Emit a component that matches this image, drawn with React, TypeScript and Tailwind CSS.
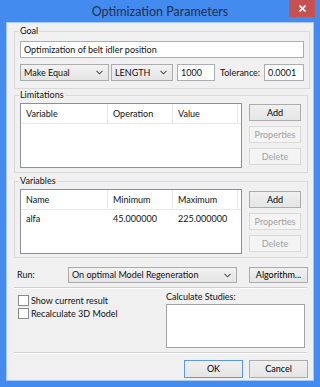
import React from "react";

function Chevron() {
  return (
    <svg width="7" height="5" viewBox="0 0 7 5" className="shrink-0">
      <polyline points="0.5,0.8 3.5,3.8 6.5,0.8" fill="none" stroke="#505050" strokeWidth="1.1" />
    </svg>
  );
}

function Combo({ text, className }: { text: string; className: string }) {
  return (
    <div
      className={`h-[17px] border border-[#acacac] bg-linear-to-b from-[#f2f2f2] to-[#e4e4e4] flex items-center pl-[3px] pr-[5px] ${className}`}
    >
      <span className="flex-1 truncate">{text}</span>
      <Chevron />
    </div>
  );
}

function Btn({
  label,
  disabled,
  className = "",
}: {
  label: string;
  disabled?: boolean;
  className?: string;
}) {
  return (
    <button
      className={`h-[17px] border flex items-center justify-center ${
        disabled
          ? "border-[#d9d9d9] bg-[#f4f4f4] text-[#a0a0a0]"
          : "border-[#acacac] bg-linear-to-b from-[#f0f0f0] to-[#e5e5e5] text-[#000]"
      } ${className}`}
    >
      {label}
    </button>
  );
}

function ListView({ cols, rows }: { cols: string[]; rows: string[][] }) {
  const widths = ["w-[87px]", "w-[65px]", "w-[65px]"];
  return (
    <div className="w-[222px] h-[65px] border border-[#8c8f96] bg-white">
      <div className="flex h-[20px] border-b border-[#e8e8e8]">
        {cols.map((c, i) => (
          <div key={c} className={`${widths[i]} border-r border-[#e8e8e8] pl-[5px] flex items-center`}>
            {c}
          </div>
        ))}
      </div>
      {rows.map((r, j) => (
        <div key={j} className="flex h-[17px] items-center">
          {r.map((v, i) => (
            <div key={i} className={`${widths[i]} pl-[5px]`}>
              {v}
            </div>
          ))}
        </div>
      ))}
    </div>
  );
}

function SideButtons({ first }: { first: string }) {
  return (
    <div className="flex flex-col gap-[5px] ml-[7px] w-[52px]">
      <Btn label={first} />
      <Btn label="Properties" disabled />
      <Btn label="Delete" disabled />
    </div>
  );
}

function Checkbox({ label }: { label: string }) {
  return (
    <div className="flex items-center h-[13px]">
      <div className="w-[11px] h-[11px] border border-[#8a8a8a] bg-white" />
      <span className="ml-[2px]">{label}</span>
    </div>
  );
}

export default function App() {
  return (
    <div className="w-[320px] h-[387px] bg-[#438bee] flex flex-col text-[9px] leading-[10px] text-[#111] font-[Lato,'Liberation_Sans',sans-serif]">
      <div className="h-[22px] relative flex items-center justify-center">
        <span className="text-[12.5px] leading-none text-[#1f3050] pt-[2px]">Optimization Parameters</span>
        <div className="absolute right-[5px] top-0 w-[26px] h-[17px] bg-[#c75050] flex items-center justify-center">
          <svg width="7" height="7" viewBox="0 0 7 7">
            <path d="M0.5 0.5 L6.5 6.5 M6.5 0.5 L0.5 6.5" stroke="#fff" strokeWidth="1.6" />
          </svg>
        </div>
      </div>

      <div className="mx-[6px] h-[359px] border border-[#a9c9f6] bg-[#f0f0f0] pl-[7px] pr-[5px] pt-[3px] overflow-hidden">
        {/* Goal */}
        <fieldset className="border border-[#d9d9d9] px-[5px] pt-[5px] pb-[7px]">
          <legend className="leading-[10px] px-[1px] -ml-[1px]">Goal</legend>
          <div className="h-[17px] border border-[#abadb3] bg-white flex items-center pl-[3px]">
            Optimization of belt idler position
          </div>
          <div className="flex items-center mt-[6px] h-[17px]">
            <Combo text="Make Equal" className="w-[89px]" />
            <Combo text="LENGTH" className="w-[62px] ml-[2px]" />
            <div className="w-[38px] ml-[4px] h-[17px] border border-[#abadb3] bg-white flex items-center pl-[3px]">
              1000
            </div>
            <span className="ml-[5px] w-[44px]">Tolerance:</span>
            <div className="w-[40px] h-[17px] border border-[#abadb3] bg-white flex items-center pl-[3px]">
              0.0001
            </div>
          </div>
        </fieldset>

        {/* Limitations */}
        <fieldset className="border border-[#d9d9d9] px-[5px] pt-[3px] pb-[4px] mt-[1px]">
          <legend className="leading-[10px] px-[1px] -ml-[1px]">Limitations</legend>
          <div className="flex items-start">
            <ListView cols={["Variable", "Operation", "Value"]} rows={[]} />
            <div className="mt-[1px]">
              <SideButtons first="Add" />
            </div>
          </div>
        </fieldset>

        {/* Variables */}
        <fieldset className="border border-[#d9d9d9] px-[5px] pt-[3px] pb-[3px] mt-[3px]">
          <legend className="leading-[10px] px-[1px] -ml-[1px]">Variables</legend>
          <div className="flex items-start">
            <ListView
              cols={["Name", "Minimum", "Maximum"]}
              rows={[["alfa", "45.000000", "225.000000"]]}
            />
            <div className="mt-[2px]">
              <SideButtons first="Add" />
            </div>
          </div>
        </fieldset>

        {/* Run */}
        <div className="flex items-center mt-[9px] h-[16px]">
          <span className="ml-[3px] w-[51px]">Run:</span>
          <Combo text="On optimal Model Regeneration" className="w-[169px] !h-[16px]" />
          <Btn label="Algorithm..." className="ml-[12px] w-[59px] !h-[16px]" />
        </div>

        <div className="mt-[4px] mr-[1px] border-t border-[#d0d0d0] border-b border-b-white" />

        <div className="flex mt-[3px]">
          <div className="flex flex-col ml-[4px] w-[148px] pt-[2px]">
            <Checkbox label="Show current result" />
            <Checkbox label="Recalculate 3D Model" />
          </div>
          <div className="flex flex-col">
            <span className="h-[10px]">Calculate Studies:</span>
            <div className="mt-[2px] w-[139px] h-[44px] border border-[#a3a3a3] bg-white" />
          </div>
        </div>

        <div className="mt-[4px] mr-[1px] border-t border-[#d0d0d0] border-b border-b-white" />

        <div className="flex justify-end mt-[6px] gap-[6px]">
          <Btn label="OK" className="w-[59px] !h-[18px] !border-[#5a9ae0]" />
          <Btn label="Cancel" className="w-[59px] !h-[18px]" />
        </div>
      </div>
    </div>
  );
}
